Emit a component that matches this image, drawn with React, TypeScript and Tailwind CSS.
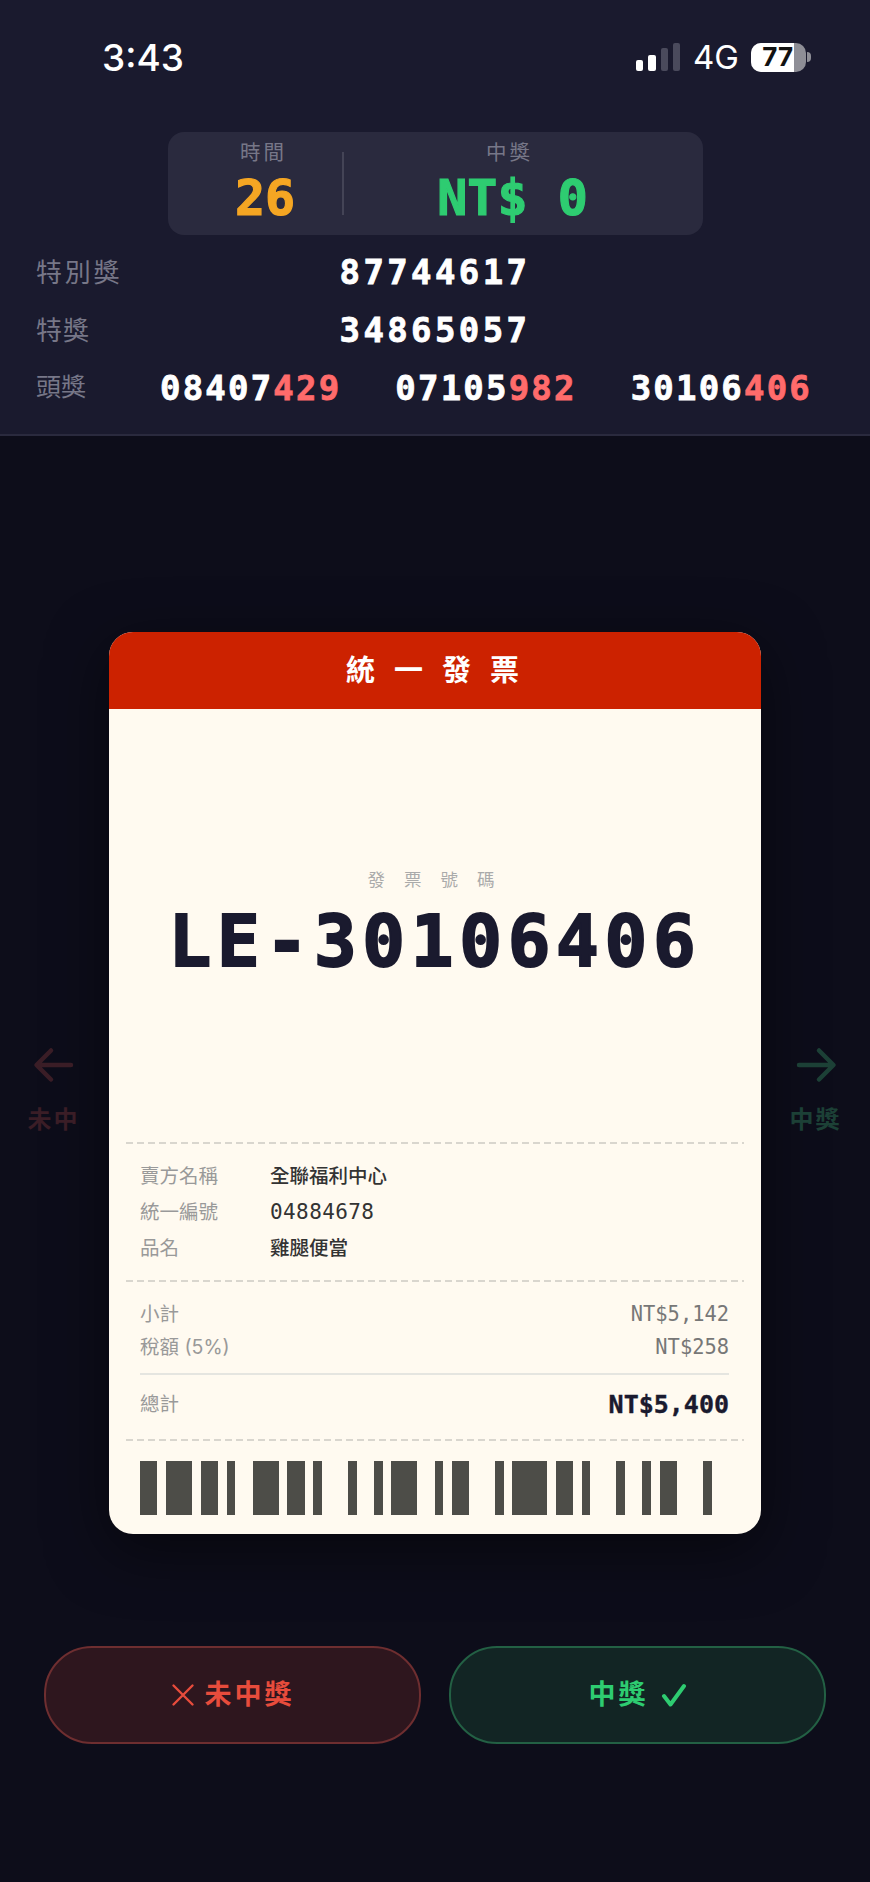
const SANS = "font-['Inter','Noto_Sans_CJK_TC',sans-serif]";
const MONO = "font-['DejaVu_Sans_Mono','Noto_Sans_CJK_TC',monospace]";

const barcode: [number, number][] = [
  [2, 1], [3, 1], [2, 1], [1, 2], [3, 1], [2, 1], [1, 3], [1, 2], [1, 1], [3, 2],
  [1, 1], [2, 3], [1, 1], [4, 1], [2, 1], [1, 3], [1, 2], [1, 1], [2, 3], [1, 0],
];
const BAR_UNIT = 8.67;

const firstPrizes = [
  ["08407", "429"],
  ["07105", "982"],
  ["30106", "406"],
];

function Divider() {
  return <div className="mx-[17px] h-[2px] bg-[repeating-linear-gradient(90deg,#d9d6ce_0,#d9d6ce_7px,transparent_7px,transparent_11px)]" />;
}

function InfoRow({ label, value, mono }: { label: string; value: string; mono?: boolean }) {
  return (
    <div className="flex h-[36px] items-center text-[19.5px]">
      <span className="w-[130px] text-[#999999]">{label}</span>
      <span className={mono ? `${MONO} text-[21px] tracking-[0.4px] text-[#333333]` : "font-medium text-[#333333]"}>{value}</span>
    </div>
  );
}

function StatusBar() {
  return (
    <div className="flex h-[114px] items-center justify-between pl-[102px] pr-[59px] text-white">
      <span className="text-[37px] font-medium leading-none">3:43</span>
      <div className="flex items-center">
        <div className="flex h-[28px] items-end gap-[5px]">
          <span className="h-[11px] w-[7px] rounded-[2px] bg-white" />
          <span className="h-[16px] w-[8px] rounded-[2px] bg-white" />
          <span className="h-[23px] w-[7px] rounded-[2px] bg-[#4a4a5c]" />
          <span className="h-[28px] w-[7px] rounded-[2px] bg-[#4a4a5c]" />
        </div>
        <span className="ml-[13px] text-[33px] leading-none">4G</span>
        <div className="ml-[12px] flex items-center">
          <div className="h-[29px] w-[55px] overflow-hidden rounded-[10px] bg-[#8e8e96]">
            <div className="flex h-full w-[43px] items-center justify-end bg-white pr-[1px] text-[26px] font-bold leading-none text-[#111111]">
              77
            </div>
          </div>
          <span className="ml-[1px] h-[10px] w-[4px] rounded-r-full bg-[#8e8e96]" />
        </div>
      </div>
    </div>
  );
}

function ScoreCard() {
  return (
    <div className="mx-auto mt-[18px] flex h-[103px] w-[535px] items-start rounded-[16px] bg-[#2a2a3e] pl-[68px]">
      <div className="flex w-[59px] flex-col items-center">
        <span className="mt-[9px] h-[24px] whitespace-nowrap pr-[3px] text-[20.5px] leading-[24px] tracking-[3px] text-[#777788]">時間</span>
        <span className={`${MONO} mt-[4px] text-[50px] font-bold leading-[58px] text-[#f5a623] [-webkit-text-stroke:1.2px_currentColor]`}>26</span>
      </div>
      <div className="ml-[47px] mt-[20px] h-[63px] w-[2px] bg-[#444456]" />
      <div className="ml-[94px] flex w-[150px] flex-col items-center">
        <span className="mt-[9px] h-[24px] whitespace-nowrap pr-[6px] text-[20.5px] leading-[24px] tracking-[3px] text-[#777788]">中獎</span>
        <span className={`${MONO} mt-[4px] whitespace-pre text-[50px] font-bold leading-[58px] text-[#2ecc71] [-webkit-text-stroke:1.2px_currentColor]`}>NT$ 0</span>
      </div>
    </div>
  );
}

function PrizeBoard() {
  return (
    <div className="mt-[8px] px-[36px]">
      <div className="grid h-[58px] grid-cols-[1fr_auto_1fr] items-center">
        <span className="text-[26px] tracking-[2.8px] text-[#777788]">特別獎</span>
        <span className={`${MONO} text-[34px] font-bold tracking-[3.4px] text-white [-webkit-text-stroke:0.8px_currentColor]`}>87744617</span>
      </div>
      <div className="grid h-[58px] grid-cols-[1fr_auto_1fr] items-center">
        <span className="text-[26px] tracking-[1px] text-[#777788]">特獎</span>
        <span className={`${MONO} text-[34px] font-bold tracking-[3.4px] text-white [-webkit-text-stroke:0.8px_currentColor]`}>34865057</span>
      </div>
      <div className="flex h-[58px] items-center pr-[22px]">
        <span className="w-[124px] text-[25px] text-[#777788]">頭獎</span>
        <div className="flex flex-1 justify-between">
          {firstPrizes.map(([head, tail]) => (
            <span key={head} className={`${MONO} text-[34px] font-bold tracking-[2.2px] text-white [-webkit-text-stroke:0.8px_currentColor]`}>
              {head}
              <span className="text-[#ff6b6b]">{tail}</span>
            </span>
          ))}
        </div>
      </div>
    </div>
  );
}

function Invoice() {
  return (
    <div className="h-[902px] w-[652px] overflow-hidden rounded-[24px] bg-[#fffaf0] shadow-[0_16px_60px_rgba(0,0,0,0.5)]">
      <div className="flex h-[77px] items-center justify-center bg-[#cc2200] pl-[14px] text-[29px] font-bold tracking-[19px] text-white">
        統一發票
      </div>
      <div className="flex h-[433px] flex-col items-center pt-[157px]">
        <span className="pl-[11px] text-[17.5px] leading-[28px] tracking-[19px] text-[#aaaaaa]">發票號碼</span>
        <span className={`${MONO} mt-[6px] text-[71px] font-bold leading-[84px] tracking-[5.7px] text-[#1a1a2e] [-webkit-text-stroke:2px_currentColor]`}>LE-30106406</span>
      </div>
      <Divider />
      <div className="flex h-[136px] flex-col justify-center pl-[31px] pr-[32px] pt-[2px]">
        <InfoRow label="賣方名稱" value="全聯福利中心" />
        <InfoRow label="統一編號" value="04884678" mono />
        <InfoRow label="品名" value="雞腿便當" />
      </div>
      <Divider />
      <div className="h-[157px] pl-[31px] pr-[32px] pt-[16px] text-[19.5px] text-[#999999]">
        <div className="flex h-[33px] items-center justify-between">
          <span>小計</span>
          <span className={`${MONO} text-[20.4px] text-[#777777]`}>NT$5,142</span>
        </div>
        <div className="flex h-[33px] items-center justify-between">
          <span>稅額 (5%)</span>
          <span className={`${MONO} text-[20.4px] text-[#777777]`}>NT$258</span>
        </div>
        <div className="mt-[9px] border-t-2 border-[#e5e5e0]" />
        <div className="mt-[9px] flex h-[42px] items-center justify-between">
          <span>總計</span>
          <span className={`${MONO} text-[25px] font-bold text-[#1a1a2e] [-webkit-text-stroke:0.4px_currentColor]`}>NT$5,400</span>
        </div>
      </div>
      <Divider />
      <div className="mt-[20px] flex h-[54px] pl-[31px] pr-[32px]">
        {barcode.map(([bar, gap], i) => (
          <div
            key={i}
            className="h-full shrink-0 bg-[#4d4d48]"
            style={{ width: bar * BAR_UNIT, marginRight: gap * BAR_UNIT }}
          />
        ))}
      </div>
    </div>
  );
}

export default function App() {
  return (
    <div className={`${SANS} flex h-[1882px] w-[870px] flex-col overflow-hidden bg-[#0d0d1a]`}>
      <header className="h-[436px] border-b-2 border-[#2a2a3e] bg-[#1a1a2e]">
        <StatusBar />
        <ScoreCard />
        <PrizeBoard />
      </header>

      <main className="flex items-center pt-[196px]">
        <div className="flex w-[109px] flex-col items-center pt-[17px] text-[#3a1d26]">
          <svg width="42" height="36" viewBox="0 0 42 36" fill="none" stroke="currentColor" strokeWidth="4.5" strokeLinecap="round" strokeLinejoin="round" className="-translate-x-[2px]">
            <path d="M39 18H5M19 3.5 4.5 18 19 32.5" />
          </svg>
          <span className="mt-[21px] pl-[2px] text-[24px] font-bold leading-[32px] tracking-[2px] -translate-x-[2px]">未中</span>
        </div>
        <Invoice />
        <div className="flex w-[109px] flex-col items-center pt-[17px] text-[#1c4036]">
          <svg width="42" height="36" viewBox="0 0 42 36" fill="none" stroke="currentColor" strokeWidth="4.5" strokeLinecap="round" strokeLinejoin="round" className="translate-x-[1px]">
            <path d="M3 18H37M23 3.5 37.5 18 23 32.5" />
          </svg>
          <span className="mt-[21px] text-[24px] font-bold leading-[32px] tracking-[2px]">中獎</span>
        </div>
      </main>

      <div className="mt-[112px] flex gap-[28px] px-[44px]">
        <button type="button" className="flex h-[98px] flex-1 items-center justify-center gap-[10px] rounded-[48px] border-2 border-[#6e2e30] bg-[#2e161e] text-[27px] font-bold tracking-[3px] text-[#e74c3c]">
          <svg width="24" height="24" viewBox="0 0 24 24" fill="none" stroke="currentColor" strokeWidth="2.4" strokeLinecap="round">
            <path d="M2.5 2.5 21.5 21.5M21.5 2.5 2.5 21.5" />
          </svg>
          未中獎
        </button>
        <button type="button" className="flex h-[98px] flex-1 items-center justify-center gap-[12px] rounded-[48px] border-2 border-[#236044] bg-[#122524] text-[27px] font-bold tracking-[3px] text-[#2ecc71]">
          中獎
          <svg width="26" height="24" viewBox="0 0 26 24" fill="none" stroke="currentColor" strokeWidth="4" strokeLinecap="round" strokeLinejoin="round">
            <path d="M3 13 9.5 21.5 23 3" />
          </svg>
        </button>
      </div>
    </div>
  );
}
